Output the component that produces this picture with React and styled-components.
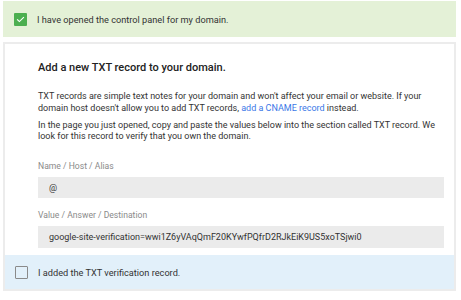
import React from 'react';
import styled, { createGlobalStyle } from 'styled-components';

const GlobalStyle = createGlobalStyle`
  body {
    margin: 0;
    background: #fff;
    font-family: Roboto, "Liberation Sans", sans-serif;
    color: #333;
  }
`;

const Page = styled.div`
  width: 453px;
  padding: 1px 0 0 3px;
`;

const Banner = styled.div`
  display: flex;
  align-items: center;
  gap: 10px;
  height: 36px;
  padding-left: 11px;
  background: #e4f1d7;
  font-size: 9.2px;
  color: #333;
`;

const Box = styled.span`
  display: inline-flex;
  align-items: center;
  justify-content: center;
  flex: none;
  width: 13px;
  height: 13px;
  box-sizing: border-box;
  border-radius: 1px;
  background: ${p => (p.checked ? '#4caf50' : 'transparent')};
  border: ${p => (p.checked ? 'none' : '1.3px solid #8a8a8a')};
  svg {
    width: 9px;
    height: 9px;
  }
`;

const Card = styled.div`
  margin-top: 5px;
  border: 2px solid #ececec;
  background: #fff;
`;

const Body = styled.div`
  padding: 17px 10px 7px 33px;
`;

const Title = styled.h2`
  margin: 0 0 16px;
  font-size: 11px;
  line-height: 14px;
  font-weight: 500;
  color: #222;
`;

const Para = styled.p`
  margin: 0 0 5px;
  font-size: 9px;
  line-height: 11.8px;
  color: #333;
`;

const Link = styled.a`
  color: #3b78e7;
  text-decoration: none;
`;

const Label = styled.div`
  margin-top: ${p => p.top}px;
  font-size: 8.6px;
  line-height: 12px;
  color: #8a8a8a;
`;

const Field = styled.div`
  display: flex;
  align-items: center;
  height: ${p => p.h}px;
  margin-top: 5px;
  padding-left: 11px;
  background: #ebebeb;
  font-size: 9px;
  color: #333;
`;

const Footer = styled.div`
  display: flex;
  align-items: center;
  gap: 10px;
  height: 34px;
  padding-left: 10px;
  background: #e2f0fa;
  font-size: 9.2px;
  color: #333;
`;

const Check = () => (
  <svg viewBox="0 0 24 24" fill="none" stroke="#fff" strokeWidth="3" strokeLinecap="square">
    <path d="M4 12.5l5 5L20 6.5" />
  </svg>
);

export default function App() {
  return (
    <>
      <GlobalStyle />
      <Page>
        <Banner>
          <Box checked>
            <Check />
          </Box>
          I have opened the control panel for my domain.
        </Banner>
        <Card>
          <Body>
            <Title>Add a new TXT record to your domain.</Title>
            <Para>
              TXT records are simple text notes for your domain and won't affect your email or website. If your
              domain host doesn't allow you to add TXT records, <Link href="#">add a CNAME record</Link> instead.
            </Para>
            <Para>
              In the page you just opened, copy and paste the values below into the section called TXT record. We
              look for this record to verify that you own the domain.
            </Para>
            <Label top={17}>Name / Host / Alias</Label>
            <Field h={21}>@</Field>
            <Label top={11}>Value / Answer / Destination</Label>
            <Field h={22}>google-site-verification=wwi1Z6yVAqQmF20KYwfPQfrD2RJkEiK9US5xoTSjwi0</Field>
          </Body>
          <Footer>
            <Box />
            I added the TXT verification record.
          </Footer>
        </Card>
      </Page>
    </>
  );
}
